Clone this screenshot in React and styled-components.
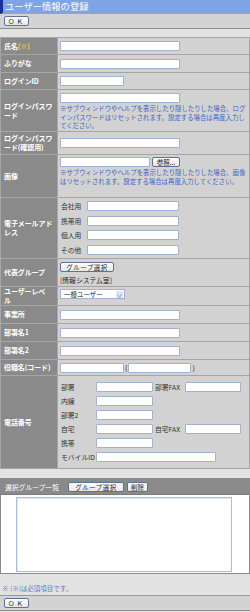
import React from 'react'
import styled, { createGlobalStyle } from 'styled-components'

const GlobalStyle = createGlobalStyle`
  body {
    margin: 0;
    background: #e2e2e2;
    font-family: "Noto Sans CJK JP", "DejaVu Sans", sans-serif;
    font-size: 7px;
  }
`;

const Page = styled.div`
  width: 250px;
  height: 612px;
  display: flex;
  flex-direction: column;
  background: #e2e2e2;
  overflow: hidden;
`;

const Title = styled.h1`
  margin: 0;
  height: 13px;
  line-height: 13px;
  background: #7fa4e6;
  border-left: 3px solid #1d2c9e;
  border-bottom: 1px solid #9aa4b4;
  padding-left: 2px;
  color: #fff;
  font-size: 9.3px;
  font-weight: normal;
`;

const Toolbar = styled.div`
  height: 14px;
  flex: none;
  display: flex;
  align-items: center;
  padding: 0 4px;
  background: #d3d3d3;
  border-bottom: 1px solid #8e8e8e;
  border-top: ${p => (p.$top ? '1px solid #9a9a9a' : 'none')};
`;

const Button = styled.button`
  height: 10px;
  padding: 0 ${p => p.$pad || 3}px;
  min-width: ${p => p.$w || 0}px;
  margin-left: ${p => p.$ml || 0}px;
  border: 1px solid #5d7296;
  border-radius: 2px;
  background: linear-gradient(#ffffff, #e6e6e6);
  font-family: "Noto Sans CJK JP", sans-serif;
  font-size: 6.5px;
  line-height: 8px;
  color: #222;
  white-space: nowrap;
  letter-spacing: ${p => p.$ls || 0}px;
`;

const Gap = styled.div`
  height: ${p => p.$h}px;
  flex: none;
`;

const FormTable = styled.table`
  width: 250px;
  border-collapse: separate;
  border-spacing: 1px;
  background: #a6a6a6;
  table-layout: fixed;
  flex: none;
`;

const Label = styled.th`
  width: 50px;
  background: #8a8a8a;
  color: #fff;
  font-size: 7px;
  font-weight: bold;
  text-align: left;
  padding: 0 3px 0 3px;
  line-height: 9px;
  letter-spacing: -0.1px;
  height: ${p => p.$h}px;
  vertical-align: middle;
`;

const Value = styled.td`
  background: #d2d2d2;
  padding: ${p => p.$pad || '0 2px'};
  vertical-align: ${p => p.$va || 'middle'};
`;

const Required = styled.span`
  color: #e8d84a;
`;

const TextInput = styled.input`
  box-sizing: border-box;
  width: ${p => p.$w}px;
  height: 10px;
  border: 1px solid #9fb3cc;
  border-radius: 1px;
  background: #fff;
  padding: 0;
  margin: 0;
  display: block;
`;

const Note = styled.div`
  color: #3d63c8;
  font-size: 6.4px;
  line-height: 8.5px;
  margin-top: 2px;
`;

const FileLine = styled.div`
  display: flex;
  align-items: center;
  gap: 2px;
`;

const SubGrid = styled.div`
  display: grid;
  grid-template-columns: ${p => p.$cols};
  align-items: center;
  row-gap: ${p => p.$rg || 4}px;
  column-gap: 2px;
  color: #333;
  font-size: 6.8px;
  line-height: 10px;
  white-space: nowrap;
`;

const SubInput = styled(TextInput)`
  grid-column: ${p => p.$span || 'auto'};
`;

const Plain = styled.div`
  color: #222;
  font-size: 6.8px;
  margin-top: 4px;
  line-height: 9px;
`;

const SelectBox = styled.div`
  width: 60px;
  height: 8px;
  display: flex;
  align-items: center;
  justify-content: space-between;
  background: #fff;
  border: 1px solid #9fb3cc;
  font-size: 6.5px;
  color: #222;
  padding-left: 3px;
`;

const Arrow = styled.span`
  width: 7px;
  height: 7px;
  margin-right: 1px;
  background: #dbe6f8;
  color: #3c5fb0;
  font-size: 5px;
  line-height: 7px;
  text-align: center;
`;

const CodeLine = styled.div`
  display: flex;
  align-items: center;
  gap: 1px;
  color: #222;
  font-size: 7px;
`;

const GroupPanel = styled.section`
  flex: none;
  border: 1px solid #8a8a8a;
  background: #fff;
`;

const GroupHeader = styled.div`
  height: 15px;
  display: flex;
  align-items: center;
  gap: 3px;
  padding-left: 4px;
  background: #8a8a8a;
  color: #fff;
  font-size: 6.8px;
  border-bottom: 1px solid #7a7a7a;
`;

const GroupList = styled.div`
  margin: 2px 17px 1px 15px;
  height: 73px;
  border: 1px solid #a8bedb;
  box-shadow: inset 1px 1px 0 #dfe7f2;
  background: #fff;
`;

const Footnote = styled.div`
  flex: none;
  color: #5a7ad0;
  font-size: 6.5px;
  padding-left: 2px;
  height: 9px;
  line-height: 9px;
  margin-bottom: 2px;
`;

export default function App() {
  return (
    <Page>
      <GlobalStyle />
      <Title>ユーザー情報の登録</Title>
      <Toolbar>
        <Button $w={22} $ls={2}>ＯＫ</Button>
      </Toolbar>
      <Gap $h={8} />
      <FormTable>
        <tbody>
          <tr>
            <Label $h={16}>氏名<Required>(※)</Required></Label>
            <Value><TextInput $w={120} /></Value>
          </tr>
          <tr>
            <Label $h={17}>ふりがな</Label>
            <Value><TextInput $w={120} /></Value>
          </tr>
          <tr>
            <Label $h={16}>ログインID</Label>
            <Value><TextInput $w={64} /></Value>
          </tr>
          <tr>
            <Label $h={41}>ログインパスワード</Label>
            <Value $va="top" $pad="3px 2px 0">
              <TextInput $w={120} />
              <Note>※サブウィンドウやヘルプを表示したり隠したりした場合、ログインパスワードはリセットされます。設定する場合は再度入力してください。</Note>
            </Value>
          </tr>
          <tr>
            <Label $h={22}>ログインパスワード(確認用)</Label>
            <Value><TextInput $w={120} /></Value>
          </tr>
          <tr>
            <Label $h={42}>画像</Label>
            <Value $va="top" $pad="2px 2px 0">
              <FileLine>
                <TextInput $w={90} />
                <Button $w={28}>参照...</Button>
              </FileLine>
              <Note>※サブウィンドウやヘルプを表示したり隠したりした場合、画像はリセットされます。設定する場合は再度入力してください。</Note>
            </Value>
          </tr>
          <tr>
            <Label $h={60}>電子メールアドレス</Label>
            <Value $pad="0 2px 0 3px">
              <SubGrid $cols="24px 92px" $rg={4.5}>
                <span>会社用</span><SubInput $w={92} />
                <span>携帯用</span><SubInput $w={92} />
                <span>個人用</span><SubInput $w={92} />
                <span>その他</span><SubInput $w={92} />
              </SubGrid>
            </Value>
          </tr>
          <tr>
            <Label $h={27}>代表グループ</Label>
            <Value $va="top" $pad="3px 2px 0">
              <Button $w={54} $ls={0.5}>グループ選択</Button>
              <Plain>[情報システム室]</Plain>
            </Value>
          </tr>
          <tr>
            <Label $h={18}>ユーザーレベ<br />ル</Label>
            <Value $va="top" $pad="2px 2px 0">
              <SelectBox>一般ユーザー<Arrow>∨</Arrow></SelectBox>
            </Value>
          </tr>
          <tr>
            <Label $h={17}>事業所</Label>
            <Value><TextInput $w={120} /></Value>
          </tr>
          <tr>
            <Label $h={17}>部署名1</Label>
            <Value><TextInput $w={120} /></Value>
          </tr>
          <tr>
            <Label $h={17}>部署名2</Label>
            <Value><TextInput $w={120} /></Value>
          </tr>
          <tr>
            <Label $h={15}>役職名(コード)</Label>
            <Value>
              <CodeLine>
                <TextInput $w={64} />(<TextInput $w={63} />)
              </CodeLine>
            </Value>
          </tr>
          <tr>
            <Label $h={92}>電話番号</Label>
            <Value $pad="0 2px 0 3px">
              <SubGrid $cols="33px 57px 28px 56px">
                <span>部署</span><SubInput $w={57} /><span>部署FAX</span><SubInput $w={56} />
                <span>内線</span><SubInput $w={57} /><span /><span />
                <span>部署2</span><SubInput $w={57} /><span /><span />
                <span>自宅</span><SubInput $w={57} /><span>自宅FAX</span><SubInput $w={56} />
                <span>携帯</span><SubInput $w={57} /><span /><span />
                <span>モバイルID</span><SubInput $w={120} $span="2 / span 3" />
              </SubGrid>
            </Value>
          </tr>
        </tbody>
      </FormTable>
      <Gap $h={9} />
      <GroupPanel>
        <GroupHeader>
          <span>選択グループ一覧</span>
          <Button $w={56} $ls={0.5} $ml={6}>グループ選択</Button>
          <Button $w={21} $pad={1}>削除</Button>
        </GroupHeader>
        <GroupList />
      </GroupPanel>
      <Gap $h={10} />
      <Footnote>※ (※)は必須項目です。</Footnote>
      <Toolbar $top>
        <Button $w={22} $ls={2}>ＯＫ</Button>
      </Toolbar>
    </Page>
  )
}
